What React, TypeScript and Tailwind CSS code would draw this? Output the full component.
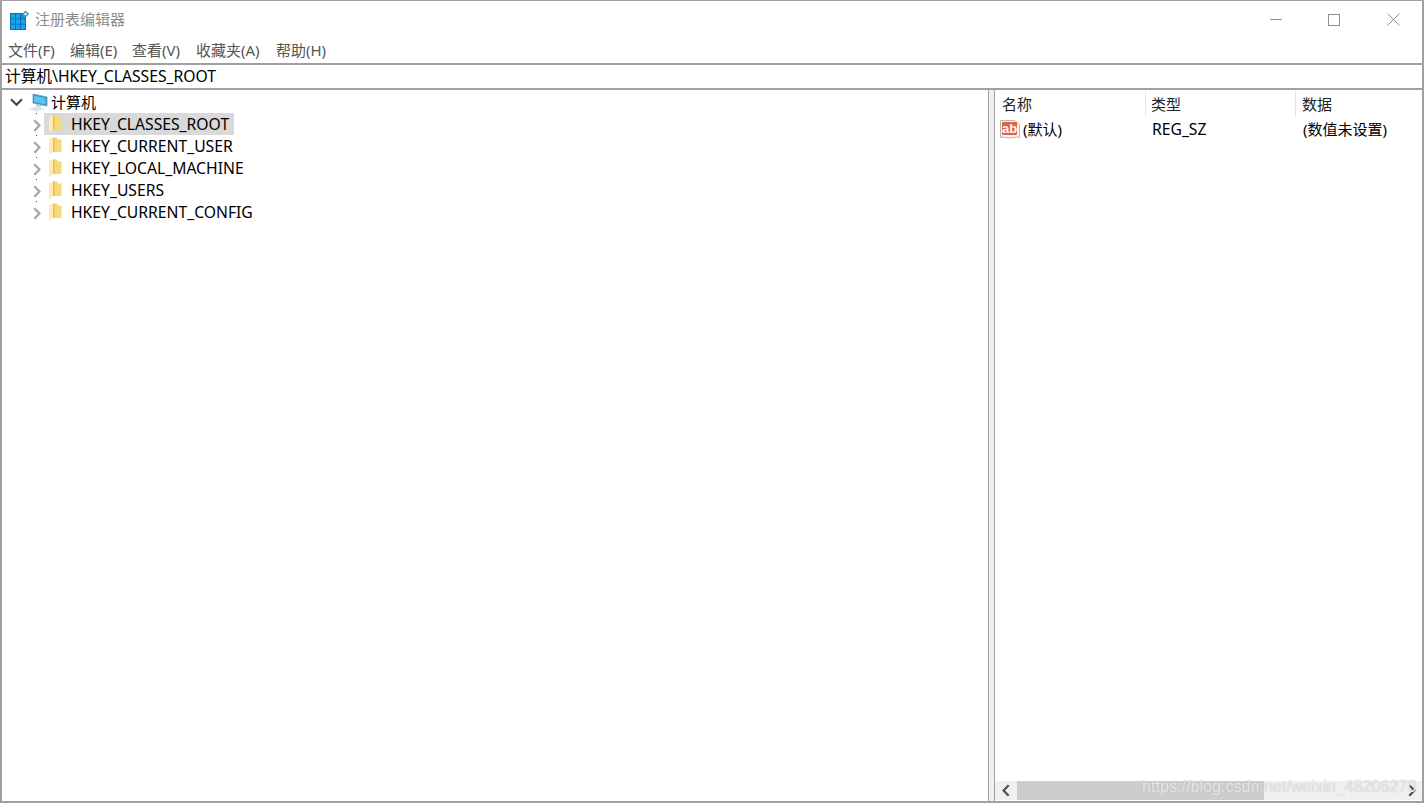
import React from 'react';

const FONT = "font-['Noto_Sans','Noto_Sans_CJK_SC',sans-serif]";

const MENUS = [
  { label: '文件(F)', width: 'w-[62px]' },
  { label: '编辑(E)', width: 'w-[62px]' },
  { label: '查看(V)', width: 'w-[64px]' },
  { label: '收藏夹(A)', width: 'w-[80px]' },
  { label: '帮助(H)', width: 'w-[62px]' },
];

const HIVES = ['HKEY_CLASSES_ROOT', 'HKEY_CURRENT_USER', 'HKEY_LOCAL_MACHINE', 'HKEY_USERS', 'HKEY_CURRENT_CONFIG'];

const AppIcon = () => (
  <svg width="20" height="20" viewBox="0 0 20 20" className="shrink-0">
    <rect x="0" y="3" width="16" height="17" fill="#0a6db5" />
    {[0, 1, 2].map((r) =>
      [0, 1, 2].map((c) => (
        <rect key={`${r}-${c}`} x={1 + c * 5} y={4 + r * 5.300} width="4" height="4.500" fill={r === 0 && c === 2 ? '#1a8fd8' : '#14a5ec'} />
      ))
    )}
    <path d="M15.500 0.500l3.800 3.500-3.800 3.500-3.500-3.500z" fill="#3d9bd6" />
    <circle cx="15.500" cy="4" r="1.300" fill="#d8eefa" />
  </svg>
);

const ComputerIcon = () => (
  <svg width="20" height="19" viewBox="0 0 20 19" className="shrink-0">
    <path d="M5 1l14 3v9L5 10z" fill="#1f8fd0" stroke="#7f9cb0" strokeWidth="0.800" />
    <path d="M6 2.500l11.500 2.500v6.500L6 9z" fill="#5cc4f2" />
    <path d="M8 11l5 1v2l-5-1z" fill="#b9c4cc" />
    <path d="M0 16l9-2.500 7 2.500-7 2.800z" fill="#dfe3e6" />
  </svg>
);

const FolderIcon = () => (
  <svg width="13" height="19" viewBox="0 0 13 19" className="shrink-0">
    <path d="M4 0.500h4l1 2h3.500V15H4z" fill="#f9d877" />
    <path d="M4 0.500h1.500V15H4z" fill="#e8bd57" />
    <path d="M0 2l4-1.500V15l-4 3z" fill="#fdebb0" />
  </svg>
);

const RightChevron = ({ color }: { color: string }) => (
  <svg width="8" height="13" viewBox="0 0 8 13" className="shrink-0">
    <path d="M1.300 1.200L6.500 6.500L1.300 11.800" fill="none" stroke={color} strokeWidth="2.300" />
  </svg>
);

const TreeRow = ({ label, selected }: { label: string; selected: boolean }) => (
  <div className="relative flex h-[22px] items-center">
    <span className="absolute left-[34px] top-[0px] h-px w-px bg-[#555]" />
    <div className="ml-[31px] mr-[3px] mt-[3px] w-[8px]">
      <RightChevron color="#a6a6a6" />
    </div>
    <div className={`flex h-[22px] items-center pr-[5px] ${selected ? 'bg-[#d9d9d9]' : ''}`}>
      <div className="ml-[5px] mt-[1px] w-[22px]">
        <FolderIcon />
      </div>
      <span className="pt-[2px] text-[15.700px] text-black">{label}</span>
    </div>
  </div>
);

const ColumnHead = ({ label, width }: { label: string; width: string }) => (
  <div className={`flex h-[26px] items-center ${width} pl-[7px] text-[15px] text-[#222]`}>{label}</div>
);

export default function App() {
  return (
    <div className={`flex h-[803px] w-[1424px] flex-col overflow-hidden border-x-2 border-b-2 border-t border-[#a0a0a0] bg-white ${FONT}`}>
      {/* title bar */}
      <div className="flex h-[37px] shrink-0 items-center bg-white">
        <div className="ml-[8px] mr-[5px]">
          <AppIcon />
        </div>
        <span className="text-[15px] text-[#8c8c8c]">注册表编辑器</span>
        <div className="ml-auto flex items-center">
          <div className="flex h-[36px] w-[60px] items-center justify-center pl-[4px]">
            <div className="h-px w-[12px] bg-[#8f8f8f]" />
          </div>
          <div className="flex h-[36px] w-[58px] items-center justify-center pl-[2px]">
            <div className="h-[12px] w-[12px] border border-[#8f8f8f]" />
          </div>
          <div className="flex h-[36px] w-[60px] items-center justify-center pl-[2px]">
            <svg width="13" height="13" viewBox="0 0 13 13">
              <path d="M0.500 0.500l12 12M12.500 0.500l-12 12" stroke="#8f8f8f" strokeWidth="1" />
            </svg>
          </div>
        </div>
      </div>

      {/* menu */}
      <div className="flex h-[25px] shrink-0 items-center pb-[1px] pl-[6px] text-[15px] text-[#555]">
        {MENUS.map((m) => (
          <div key={m.label} className={m.width}>{m.label}</div>
        ))}
      </div>

      {/* address */}
      <div className="flex h-[27px] shrink-0 items-center border-y-2 border-[#a0a0a0] pl-[3px] text-[15.700px] text-black">
        计算机\HKEY_CLASSES_ROOT
      </div>

      {/* panes */}
      <div className="flex min-h-0 flex-1">
        <div className="w-[986px] shrink-0 pt-[1px]">
          <div className="flex h-[22px] items-center">
            <svg width="13" height="9" viewBox="0 0 13 9" className="ml-[8px] shrink-0">
              <path d="M1 1.300L6.500 6.800L12 1.300" fill="none" stroke="#404040" strokeWidth="2" />
            </svg>
            <div className="ml-[5px] mr-[3px]">
              <ComputerIcon />
            </div>
            <span className="text-[15px] text-black">计算机</span>
          </div>
          {HIVES.map((h, i) => (
            <TreeRow key={h} label={h} selected={i === 0} />
          ))}
        </div>

        <div className="w-[7px] shrink-0 border-x border-[#a0a0a0] bg-[#f0f0f0]" />

        <div className="flex min-w-0 flex-1 flex-col">
          <div className="flex pt-[1px]">
            <ColumnHead label="名称" width="w-[151px] border-r border-[#e5e5e5]" />
            <ColumnHead label="类型" width="w-[150px] border-r border-[#e5e5e5] !pl-[5px]" />
            <ColumnHead label="数据" width="flex-1 !pl-[6px]" />
          </div>
          <div className="flex h-[25px] items-center text-[15px] text-black">
            <div className="flex w-[151px] items-center pl-[5px]">
              <div className="relative mr-[3px] h-[19px] w-[20px]">
                <svg width="20" height="19" viewBox="0 0 20 19" className="absolute left-0 top-0">
                  <path d="M0.500 0.500h14l5 4v13.500c-3-2-5 0-9 0s-6-1.500-10-0.500z" fill="#f4f4f4" stroke="#b5b5b5" />
                </svg>
                <span className="absolute left-[2px] top-[2px] flex h-[13px] w-[15px] items-center justify-center rounded-[1px] bg-[#e0603f] pb-[1px] font-['Liberation_Sans',sans-serif] text-[13px] font-bold leading-none text-white">ab</span>
              </div>
              <span>(默认)</span>
            </div>
            <div className="w-[150px] pl-[6px] text-[15.700px]">REG_SZ</div>
            <div className="pl-[7px]">(数值未设置)</div>
          </div>
          <div className="flex-1" />
          <div className="mb-px flex h-[19px] items-center bg-[#f0f0f0]">
            <div className="flex w-[22px] justify-center">
              <div className="rotate-180">
                <RightChevron color="#505050" />
              </div>
            </div>
            <div className="h-full w-[247px] bg-[#cdcdcd]" />
            <div className="ml-auto flex w-[21px] justify-center">
              <RightChevron color="#505050" />
            </div>
          </div>
        </div>
      </div>

      <div className="absolute left-[1142px] top-[775px] font-['Liberation_Sans',sans-serif] text-[16px] tracking-[0.06px] text-white/70 [text-shadow:0_0_1px_#aaaaaa]">
        https://blog.csdn.net/weixin_48206270
      </div>
    </div>
  );
}
